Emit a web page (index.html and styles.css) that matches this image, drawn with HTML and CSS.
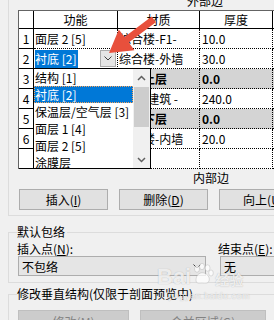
FILE: index.html
```html
<!DOCTYPE html>
<html lang="zh-CN">
<head>
    <meta charset="UTF-8">
    <meta name="viewport" content="width=device-width, initial-scale=1.0">
    <title>编辑部件</title>
    <link rel="stylesheet" href="styles.css">
</head>
<body>

    <div class="dialog">
        <!-- 层表格 -->
        <div class="edge-box">
            <div class="edge-title outer">外部边</div>
            <div class="grid">
                <div class="row head">
                    <div class="cell num"></div>
                    <div class="cell fn">功能</div>
                    <div class="cell mat">材质</div>
                    <div class="cell thk">厚度</div>
                    <div class="cell more"></div>
                </div>
                <div class="row">
                    <div class="cell num">1</div>
                    <div class="cell fn">面层 2 [5]</div>
                    <div class="cell mat">综合楼-F1-</div>
                    <div class="cell thk">10.0</div>
                    <div class="cell more"></div>
                </div>
                <div class="row">
                    <div class="cell num">2</div>
                    <div class="cell fn editing">
                        <span class="sel">衬底 [2]</span>
                        <span class="drop-btn">
                            <svg width="8" height="5" viewBox="0 0 8 5"><polyline points="0.5,0.5 4,4 7.5,0.5" fill="none" stroke="#404040" stroke-width="1"/></svg>
                        </span>
                    </div>
                    <div class="cell mat">综合楼-外墙</div>
                    <div class="cell thk">30.0</div>
                    <div class="cell more"></div>
                </div>
                <div class="row core">
                    <div class="cell num">3</div>
                    <div class="cell fn"></div>
                    <div class="cell mat hidden-head"><span>包络</span>上层</div>
                    <div class="cell thk">0.0</div>
                    <div class="cell more"></div>
                </div>
                <div class="row">
                    <div class="cell num">4</div>
                    <div class="cell fn"></div>
                    <div class="cell mat hidden-head"><span>砌体-</span>建筑 -</div>
                    <div class="cell thk">240.0</div>
                    <div class="cell more"></div>
                </div>
                <div class="row core">
                    <div class="cell num">5</div>
                    <div class="cell fn"></div>
                    <div class="cell mat hidden-head"><span>包络</span>下层</div>
                    <div class="cell thk">0.0</div>
                    <div class="cell more"></div>
                </div>
                <div class="row">
                    <div class="cell num">6</div>
                    <div class="cell fn"></div>
                    <div class="cell mat hidden-head"><span>综合</span>楼-内墙</div>
                    <div class="cell thk">20.0</div>
                    <div class="cell more"></div>
                </div>
                <div class="row">
                    <div class="cell num"></div>
                    <div class="cell fn"></div>
                    <div class="cell mat"></div>
                    <div class="cell thk"></div>
                    <div class="cell more"></div>
                </div>
            </div>
            <div class="edge-title inner">内部边</div>
            <div class="btn-row">
                <button class="btn">插入(<u>I</u>)</button>
                <button class="btn">删除(<u>D</u>)</button>
                <button class="btn">向上(<u>U</u>)</button>
            </div>
        </div>

        <!-- 默认包络 -->
        <fieldset class="group">
            <legend>默认包络</legend>
            <div class="wrap-row">
                <div class="field left">
                    <label>插入点(<u>N</u>):</label>
                    <div class="combo">
                        <span>不包络</span>
                        <svg width="8" height="5" viewBox="0 0 8 5"><polyline points="0.5,0.5 4,4 7.5,0.5" fill="none" stroke="#404040" stroke-width="1"/></svg>
                    </div>
                </div>
                <div class="field right">
                    <label>结束点(<u>E</u>):</label>
                    <div class="combo">
                        <span>无</span>
                    </div>
                </div>
            </div>
        </fieldset>

        <!-- 修改垂直结构 -->
        <fieldset class="group vertical">
            <legend>修改垂直结构(仅限于剖面预览中)</legend>
            <div class="btn-row">
                <button class="btn mid" disabled>修改(<u>M</u>)</button>
                <button class="btn wide" disabled>合并区域(<u>G</u>)</button>
            </div>
        </fieldset>
    </div>

    <!-- 功能下拉列表 -->
    <div class="fn-list">
        <div class="opts">
            <div class="opt">结构 [1]</div>
            <div class="opt active">衬底 [2]</div>
            <div class="opt">保温层/空气层 [3]</div>
            <div class="opt">面层 1 [4]</div>
            <div class="opt">面层 2 [5]</div>
            <div class="opt">涂膜层</div>
        </div>
        <div class="list-sb">
            <div class="sb-arrow">
                <svg width="9" height="6" viewBox="0 0 9 6"><polyline points="1,5 4.5,1.5 8,5" fill="none" stroke="#606060" stroke-width="1.5"/></svg>
            </div>
            <div class="sb-thumb"></div>
            <div class="sb-track"></div>
            <div class="sb-arrow">
                <svg width="9" height="6" viewBox="0 0 9 6"><polyline points="1,1 4.5,4.5 8,1" fill="none" stroke="#606060" stroke-width="1.5"/></svg>
            </div>
        </div>
    </div>

    <!-- 红色箭头 -->
    <svg class="callout" width="274" height="320" viewBox="0 0 274 320">
        <polygon points="151.7,16.6 124.5,37 118.8,29.4 109,53 134.4,50.2 128.7,42.6 155.9,22.2" fill="#e8503c"/>
    </svg>

    <!-- 水印 -->
    <div class="watermark">
        <div class="wm-logo">
            <span class="wm-bai">Bai</span>
            <svg class="wm-paw" width="22" height="22" viewBox="0 0 22 22">
                <ellipse cx="5" cy="6" rx="2.5" ry="3.2"/>
                <ellipse cx="10" cy="3.5" rx="2.5" ry="3.2"/>
                <ellipse cx="15.5" cy="5" rx="2.5" ry="3.2"/>
                <ellipse cx="19" cy="10" rx="2.3" ry="3"/>
                <path d="M4 17 C4 11 9 9 12 10 C16 11 18 15 17 18 C16 21 12 20 10 20 C7 20 4 21 4 17 Z"/>
            </svg>
            <span class="wm-jy">经验</span>
        </div>
        <div class="wm-url">jingyan.baidu.com</div>
    </div>

</body>
</html>
```

FILE: styles.css
```css
/* 基本 */
html, body {
    margin: 0;
    overflow: hidden;
}

body {
    position: relative;
    width: 274px;
    height: 320px;
    background: #f0f0f0;
    font-family: "Noto Sans CJK SC", "Microsoft YaHei", sans-serif;
    font-size: 12px;
    color: #000;
}

.dialog {
    padding-left: 8px;
}

/* 外部边 / 内部边 */
.edge-box {
    width: 300px;
    border-left: 1px solid #dcdcdc;
    border-bottom: 1px solid #dcdcdc;
    padding-bottom: 5px;
}

.edge-title {
    white-space: nowrap;
}

.edge-title.outer {
    height: 10px;
    line-height: 2px;
    overflow: hidden;
    padding-left: 178px;
}

.edge-title.inner {
    height: 17px;
    line-height: 17px;
    padding-left: 184px;
}

/* 表格 */
.grid {
    margin-left: 9px;
    width: 295px;
    border-top: 1px solid #646464;
    border-left: 1px solid #646464;
    background: #fff;
}

.row {
    display: flex;
}

.cell {
    box-sizing: border-box;
    height: 20px;
    line-height: 19px;
    padding-left: 1px;
    white-space: nowrap;
    overflow: hidden;
    border-right: 1px dotted #000;
    border-bottom: 1px dotted #000;
}

.cell.num {
    width: 15px;
    padding-left: 0;
    text-align: center;
    border-right: 1px solid #000;
    border-bottom: 1px solid #000;
}

.cell.fn { width: 84px; }
.cell.mat { width: 82px; }
.cell.thk { width: 73px; padding-left: 2px; }
.cell.more { width: 41px; border-right: none; }

/* 被下拉列表盖住的前半段文字 */
.hidden-head span {
    visibility: hidden;
}

.row.head .cell {
    height: 18px;
    line-height: 17px;
    padding-left: 0;
    text-align: center;
    border-right: 1px solid #000;
    border-bottom: 1px solid #000;
}

.row.core .cell.fn,
.row.core .cell.mat,
.row.core .cell.thk,
.row.core .cell.more {
    background: #d4d4d4;
    font-weight: bold;
}

.cell.editing {
    display: flex;
    align-items: center;
}

.sel {
    height: 18px;
    line-height: 18px;
    padding-right: 2px;
    background: #0078d7;
    color: #fff;
}

.drop-btn {
    box-sizing: border-box;
    width: 16px;
    height: 17px;
    margin-left: auto;
    margin-right: 1px;
    border: 1px solid #acacac;
    background: #e5e5e5;
    display: flex;
    align-items: center;
    justify-content: center;
}

/* 按钮 */
.btn-row {
    display: flex;
    gap: 11px;
    margin: 3px 0 0 10px;
}

.btn {
    box-sizing: border-box;
    width: 89px;
    height: 21px;
    padding: 0;
    border: 1px solid #adadad;
    background: #e1e1e1;
    font: inherit;
    line-height: 19px;
    color: #000;
}

.btn:disabled {
    background: #cccccc;
    border-color: #bfbfbf;
    color: #838383;
}

.btn.mid { width: 111px; height: 22px; }
.btn.wide { width: 126px; height: 22px; }

/* 分组框 */
.group {
    width: 300px;
    margin: 9px 0 0;
    padding: 3px 0 6px 8px;
    border: 1px solid #dcdcdc;
    border-right: none;
    min-width: 0;
}

.group legend {
    padding: 0 2px 0 0;
    line-height: 14px;
}

.group.vertical {
    margin-top: 4px;
    padding-top: 9px;
}

.group .btn-row {
    margin: 0 0 0 1px;
}

.wrap-row {
    display: grid;
    grid-template-columns: 189px 1fr;
    column-gap: 12px;
}

.field label {
    display: block;
    line-height: 14px;
    white-space: nowrap;
}

.combo {
    box-sizing: border-box;
    height: 20px;
    padding: 0 4px 0 3px;
    border: 1px solid #adadad;
    background: #e5e5e5;
    display: flex;
    align-items: center;
}

.combo span {
    flex: 1;
}

.field.left .combo {
    width: 188px;
    margin-left: 1px;
}

.field.right .combo {
    width: 100px;
    margin-left: 2px;
}

/* 下拉列表 */
.fn-list {
    position: absolute;
    left: 33px;
    top: 68px;
    box-sizing: border-box;
    width: 118px;
    height: 101px;
    border: 1px solid #000;
    background: #fff;
    display: flex;
}

.opts {
    flex: 1;
    overflow: hidden;
}

.opt {
    height: 17px;
    line-height: 17px;
    padding-left: 1px;
    white-space: nowrap;
}

.opt.active {
    background: #0078d7;
    color: #fff;
    outline: 1px dotted #f7a35c;
    outline-offset: -1px;
}

.list-sb {
    width: 17px;
    background: #f0f0f0;
    display: flex;
    flex-direction: column;
}

.sb-arrow {
    height: 17px;
    display: flex;
    align-items: center;
    justify-content: center;
}

.sb-thumb {
    height: 40px;
    margin: 1px 1px 0;
    background: #cdcdcd;
}

.sb-track {
    flex: 1;
}

/* 箭头 */
.callout {
    position: absolute;
    left: 0;
    top: 0;
    pointer-events: none;
}

/* 水印 */
.watermark {
    position: absolute;
    left: 157px;
    top: 262px;
    color: rgba(255, 255, 255, 0.8);
    text-shadow: 0 0 1px rgba(90, 90, 90, 0.45);
    pointer-events: none;
}

.wm-logo {
    display: flex;
    align-items: flex-end;
    height: 27px;
}

.wm-bai {
    font-family: "Liberation Sans", Arial, sans-serif;
    font-size: 22px;
    font-weight: bold;
    line-height: 24px;
}

.wm-paw {
    fill: rgba(255, 255, 255, 0.75);
    stroke: rgba(90, 90, 90, 0.3);
    stroke-width: 0.6;
    margin: 0 1px 4px 1px;
}

.wm-jy {
    font-size: 14px;
    font-weight: bold;
    line-height: 20px;
}

.wm-url {
    margin: 2px 0 0 12px;
    font-family: "Liberation Sans", Arial, sans-serif;
    font-size: 9px;
    line-height: 10px;
    letter-spacing: 0.5px;
}
```
